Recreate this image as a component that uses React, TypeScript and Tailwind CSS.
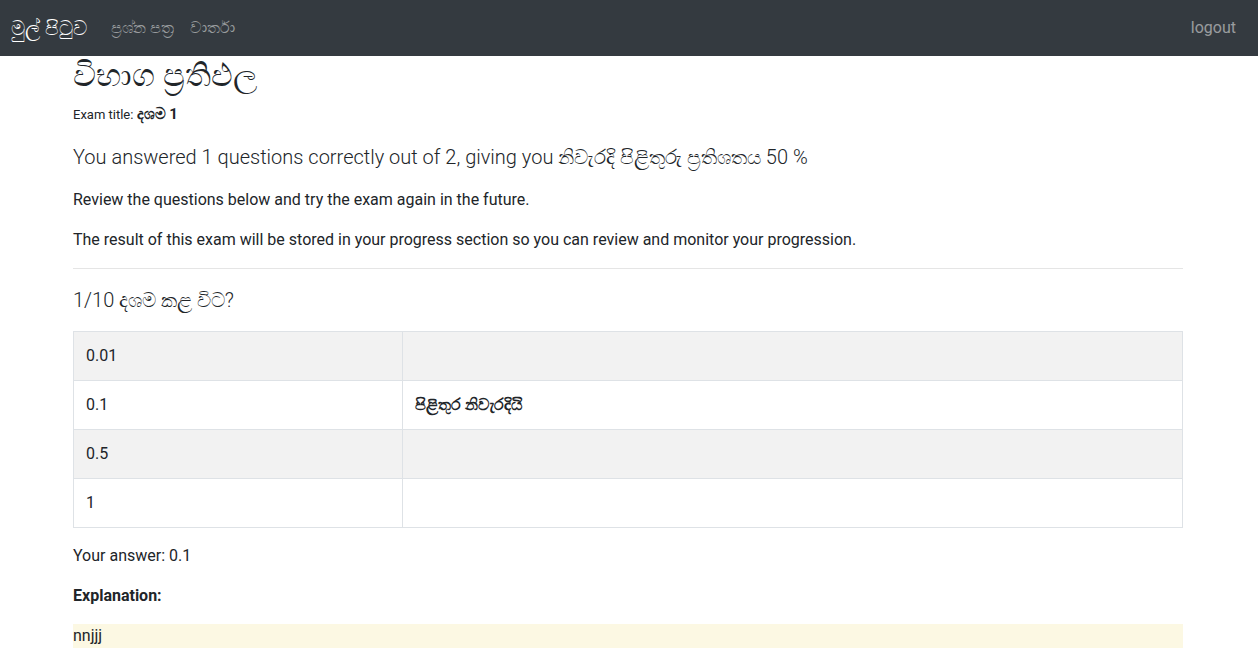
import React from "react";

const rows = [
  { a: "0.01", b: "" },
  { a: "0.1", b: "පිළිතුර නිවැරදියි" },
  { a: "0.5", b: "" },
  { a: "1", b: "" },
];

export default function App() {
  return (
    <div className="min-h-[651px] bg-white text-[#212529]" style={{ fontFamily: "Roboto, 'Noto Sans', sans-serif" }}>
      <nav className="flex h-14 items-center justify-between bg-[#343a40] pl-[11px] pr-[14px]">
        <div className="flex items-center">
          <a className="mr-4 text-[20px] leading-[30px] text-white">මුල් පිටුව</a>
          <a className="px-2 text-[16px] leading-6 text-white/50">ප්‍රශ්න පත්‍ර</a>
          <a className="px-2 text-[16px] leading-6 text-white/50">වාර්තා</a>
        </div>
        <a className="px-2 text-[16px] leading-6 text-white/50">logout</a>
      </nav>
      <div className="ml-[58px] w-[1140px] px-[15px]">
        <h1 className="mb-[10px] text-[32px] font-normal leading-[38px]">විභාග ප්‍රතිඵල</h1>
        <div className="text-[13px] leading-5">
          Exam title: <b className="text-[15px] font-bold">දශම 1</b>
        </div>
        <p className="mt-[17px] text-[20px] font-light leading-[30px]">
          You answered 1 questions correctly out of 2, giving you නිවැරදි පිළිතුරු ප්‍රතිශතය 50 %
        </p>
        <p className="mt-4 text-[16px] leading-6">Review the questions below and try the exam again in the future.</p>
        <p className="mt-4 text-[16px] leading-6">
          The result of this exam will be stored in your progress section so you can review and monitor your progression.
        </p>
        <hr className="mt-4 border-t border-black/10" />
        <h4 className="mt-4 text-[20px] font-light leading-[30px]">1/10 දශම කළ විට?</h4>
        <table className="mt-4 w-full border-collapse border border-[#dee2e6] text-[16px] leading-6">
          <tbody>
            {rows.map((r, i) => (
              <tr key={i} className={i % 2 === 0 ? "bg-[#f2f2f2]" : "bg-white"}>
                <td className="h-[49px] w-[329px] border border-[#dee2e6] px-3 py-3">{r.a}</td>
                <td className="h-[49px] border border-[#dee2e6] px-3 py-3 font-bold">{r.b}</td>
              </tr>
            ))}
          </tbody>
        </table>
        <p className="mt-4 text-[16px] leading-6">Your answer: 0.1</p>
        <p className="mt-4 text-[16px] font-bold leading-6">Explanation:</p>
        <p className="mt-4 bg-[#fcf8e3] text-[16px] leading-6">nnjjj</p>
      </div>
    </div>
  );
}
